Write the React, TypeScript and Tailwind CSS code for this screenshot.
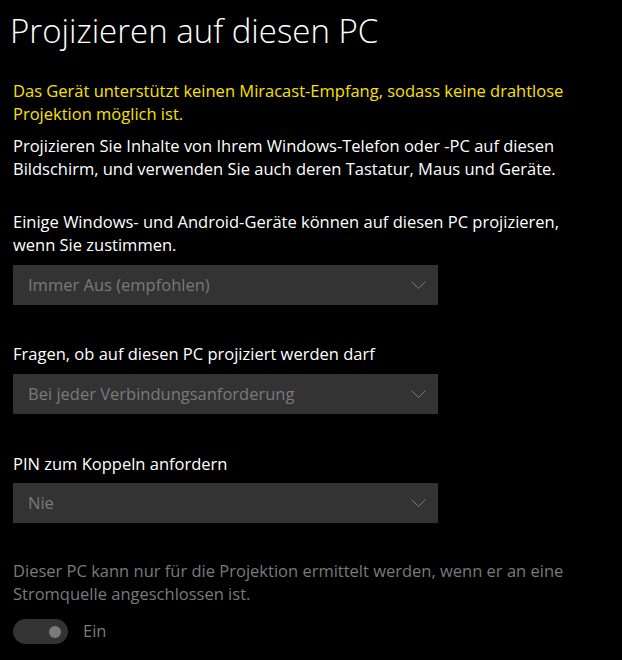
import React from 'react';

const font = { fontFamily: '"Open Sans", "Noto Sans", sans-serif' };

interface DropdownProps {
  value: string;
}

const Dropdown: React.FC<DropdownProps> = ({ value }) => (
  <div className="flex h-10 w-[425px] items-center justify-between bg-[#333333] pl-[15px] pr-3 text-[16.5px] text-[#7a7a7a]">
    <span>{value}</span>
    <svg width="15" height="9" viewBox="0 0 15 9" fill="none">
      <path d="M0.5 0.5 L7.5 7.5 L14.5 0.5" stroke="#7a7a7a" strokeWidth="1" />
    </svg>
  </div>
);

export default function App() {
  return (
    <div className="min-h-[660px] w-[622px] bg-black pl-[13px] pt-[9px] text-white" style={font}>
      {/* Page title */}
      <h1 className="-ml-[3px] text-[33px] font-light leading-[44px]">Projizieren auf diesen PC</h1>

      <p className="mt-[26px] text-[16.5px] leading-[23px] text-[#fce100]">
        Das Gerät unterstützt keinen Miracast-Empfang, sodass keine drahtlose
        <br />
        Projektion möglich ist.
      </p>
      <p className="mt-[9px] text-[16.5px] leading-[23px]">
        Projizieren Sie Inhalte von Ihrem Windows-Telefon oder -PC auf diesen
        <br />
        Bildschirm, und verwenden Sie auch deren Tastatur, Maus und Geräte.
      </p>

      <p className="mt-[30px] text-[16.5px] leading-[23px]">
        Einige Windows- und Android-Geräte können auf diesen PC projizieren,
        <br />
        wenn Sie zustimmen.
      </p>
      <div className="mt-[9px]">
        <Dropdown value="Immer Aus (empfohlen)" />
      </div>

      <p className="mt-[37px] text-[16.5px] leading-[23px]">Fragen, ob auf diesen PC projiziert werden darf</p>
      <div className="mt-[9px]">
        <Dropdown value="Bei jeder Verbindungsanforderung" />
      </div>

      <p className="mt-[38px] text-[16.5px] leading-[23px]">PIN zum Koppeln anfordern</p>
      <div className="mt-2">
        <Dropdown value="Nie" />
      </div>

      <p className="mt-9 text-[16.5px] leading-[23px] text-[#7a7a7a]">
        Dieser PC kann nur für die Projektion ermittelt werden, wenn er an eine
        <br />
        Stromquelle angeschlossen ist.
      </p>

      {/* Disabled toggle */}
      <div className="mt-[14px] flex items-center gap-[15px]">
        <div className="flex h-[25px] w-[55px] items-center justify-end rounded-full bg-[#333333] pr-[7px]">
          <div className="h-3 w-3 rounded-full bg-[#7a7a7a]" />
        </div>
        <span className="text-[16.5px] text-[#7a7a7a]">Ein</span>
      </div>
    </div>
  );
}
